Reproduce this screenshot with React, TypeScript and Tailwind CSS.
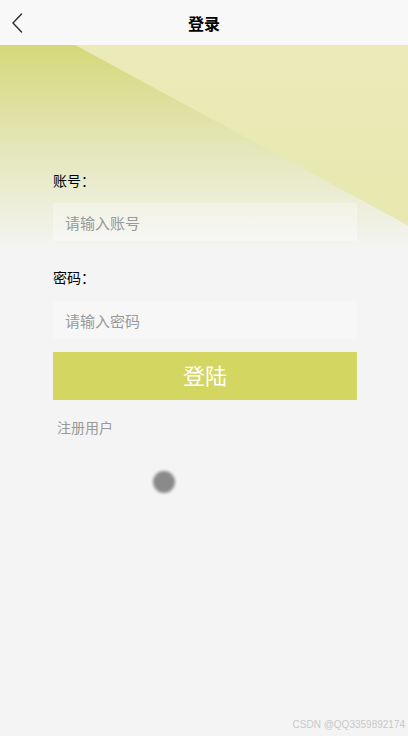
import React from 'react'

export default function App() {
  return (
    <div className="relative min-h-[736px] w-full overflow-hidden bg-[#f4f4f4] font-['Noto_Sans_CJK_SC','Noto_Sans',sans-serif]">
      <header className="relative flex h-[45px] items-center justify-center bg-[#f8f8f8]">
        <svg className="absolute left-[10px] top-[12px]" width="16" height="22" viewBox="0 0 16 22" fill="none">
          <path d="M11.5 2 L3 11 L11.5 20" stroke="#333" strokeWidth="1.5" strokeLinecap="round" strokeLinejoin="round" />
        </svg>
        <h1 className="text-[16px] font-bold leading-none text-black">登录</h1>
      </header>

      <main className="relative">
        {/* decorative background */}
        <div className="absolute inset-x-0 top-0 h-[205px] bg-gradient-to-b from-[#d5d877] to-[#f4f4f4]">
          <div className="absolute inset-0 bg-gradient-to-b from-[#eaebb8] to-[#e6e8ae] [clip-path:polygon(18.4%_0,100%_0,100%_88%)]" />
        </div>

        <div className="relative pl-[53px] pr-[51px] pt-[125px]">
          <div className="text-[14px] leading-[20px] text-black">账号：</div>
          <input
            className="mt-[13px] h-[38px] w-full bg-white/30 px-3 text-[15px] text-[#333] outline-none placeholder:text-[#999]"
            placeholder="请输入账号"
          />
          <div className="mt-[26px] text-[14px] leading-[20px] text-black">密码：</div>
          <input
            type="password"
            className="mt-[14px] h-[38px] w-full bg-white/30 px-3 text-[15px] text-[#333] outline-none placeholder:text-[#999]"
            placeholder="请输入密码"
          />
          <button className="mt-[13px] flex h-[48px] w-full items-center justify-center bg-[#d4d662] pb-[3px] text-[22px] text-white">
            登陆
          </button>
          <div className="mt-[17px] pl-1 text-[14px] leading-[20px] text-[#999]">注册用户</div>
          <div className="ml-[100px] mt-[34px] h-[22px] w-[22px] rounded-full bg-[#8a8a8a] blur-[1.5px]" />
        </div>
      </main>

      <div className="absolute bottom-[6px] right-[3px] font-['Liberation_Sans',sans-serif] text-[10px] leading-none text-[#c8c8c8]">
        CSDN @QQ3359892174
      </div>
    </div>
  )
}
